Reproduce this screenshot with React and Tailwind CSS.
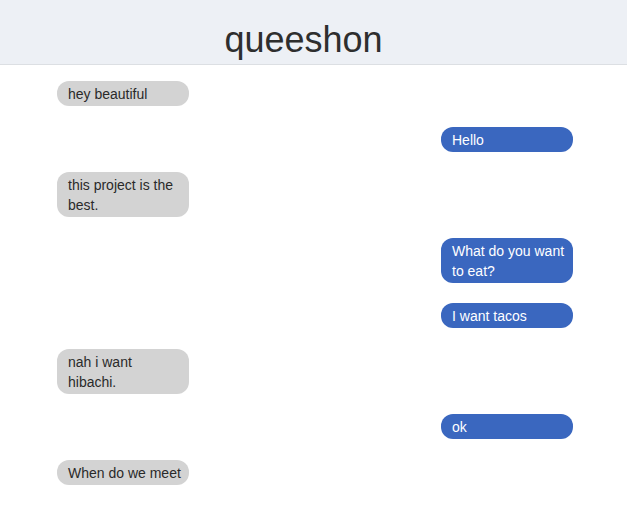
const messages = [
  { id: 1, text: 'hey beautiful', mine: false },
  { id: 2, text: 'Hello', mine: true },
  { id: 3, text: 'this project is the best.', mine: false },
  { id: 4, text: 'What do you want to eat?', mine: true },
  { id: 5, text: 'I want tacos', mine: true },
  { id: 6, text: 'nah i want hibachi.', mine: false },
  { id: 7, text: 'ok', mine: true },
  { id: 8, text: 'When do we meet', mine: false },
];

function Bubble({ text, mine }) {
  return (
    <div className={mine ? 'flex justify-end' : 'flex justify-start'}>
      <div
        className={
          mine
            ? 'w-[132px] rounded-xl bg-[#3a67bf] pl-[11px] pr-[8px] pt-[3px] pb-[2px] text-[14px] leading-[20px] text-white'
            : 'w-[132px] rounded-xl bg-[#d3d3d3] pl-[11px] pr-[8px] pt-[3px] pb-[2px] text-[14px] leading-[20px] text-[#2a2a2a]'
        }
      >
        {text}
      </div>
    </div>
  );
}

export default function App() {
  return (
    <div className="min-h-[520px] bg-white font-['Liberation_Sans',Arial,sans-serif]">
      <header className="h-[65px] border-b border-[#dcdfe3] bg-[#edf0f5] pt-[22px] pr-5 text-center">
        <h1 className="text-[36px] leading-none text-[#2e2e2e]">queeshon</h1>
      </header>

      <div className="flex flex-col gap-[20.5px] pt-[16px] pl-[57px] pr-[54px] pb-6">
        {messages.map((m) => (
          <Bubble key={m.id} text={m.text} mine={m.mine} />
        ))}
      </div>
    </div>
  );
}
